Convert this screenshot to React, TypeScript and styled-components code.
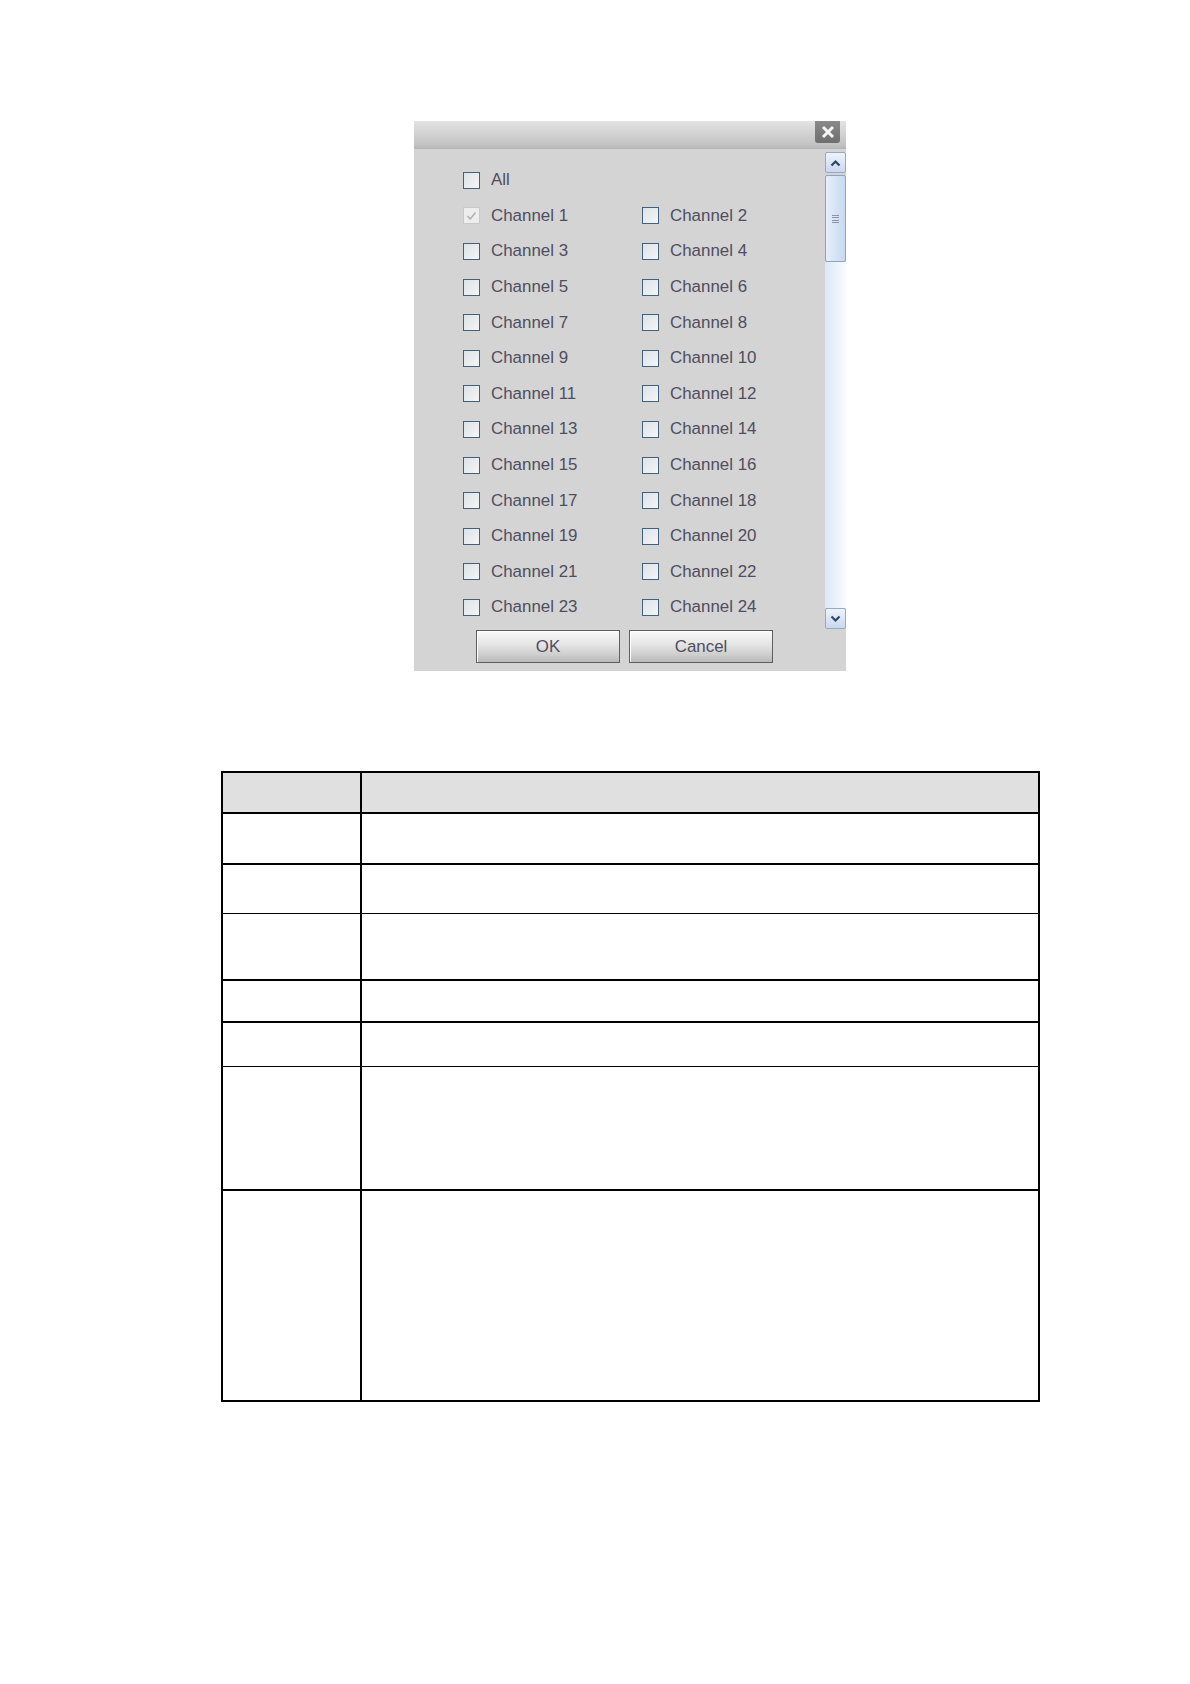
import React from "react";
import styled, { createGlobalStyle } from "styled-components";

const Global = createGlobalStyle`
  html, body { margin: 0; padding: 0; background: #ffffff; }
  body { font-family: "Liberation Sans", Arial, sans-serif; }
`;

const Page = styled.div`
  width: 1190px;
  min-height: 1684px;
  display: flex;
  flex-direction: column;
  padding-top: 121px;
  box-sizing: border-box;
`;

const Dialog = styled.div`
  margin-left: 414px;
  width: 432px;
  height: 550px;
  background: #d4d4d4;
  display: flex;
  flex-direction: column;
`;

const TitleBar = styled.div`
  height: 28px;
  flex: none;
  background: linear-gradient(#e3e3e3 0%, #d2d2d2 45%, #c2c2c2 85%, #b4b4b4 100%);
  display: flex;
  justify-content: flex-end;
  align-items: flex-start;
  padding-right: 6px;
`;

const CloseButton = styled.div`
  width: 25px;
  height: 22px;
  background: linear-gradient(#8a8a8a, #6e6e6e);
  border-radius: 0 0 3px 3px;
  display: flex;
  align-items: center;
  justify-content: center;
`;

const Body = styled.div`
  flex: 1;
  display: flex;
  flex-direction: column;
`;

const Main = styled.div`
  height: 480px;
  display: flex;
`;

const List = styled.div`
  flex: 1;
  padding: 13.5px 0 0 49px;
  display: grid;
  grid-template-columns: 179px 179px;
  grid-auto-rows: 35.6px;
  align-content: start;
`;

const Item = styled.label<{ $full?: boolean }>`
  display: flex;
  align-items: center;
  gap: 11px;
  grid-column: ${(p) => (p.$full ? "1 / span 2" : "auto")};
  font-size: 16.9px;
  color: #4f4e60;
  white-space: nowrap;
`;

const Box = styled.span<{ $checked?: boolean }>`
  width: 17px;
  height: 17px;
  box-sizing: border-box;
  flex: none;
  display: flex;
  align-items: center;
  justify-content: center;
  border: ${(p) => (p.$checked ? "1px solid #c9c9c9" : "1.6px solid #45607c")};
  background: ${(p) =>
    p.$checked ? "#ededed" : "linear-gradient(135deg, #dde3e8, #f4f5f6)"};
`;

const ScrollBar = styled.div`
  width: 21px;
  margin-top: 3px;
  display: flex;
  flex-direction: column;
`;

const Arrow = styled.div`
  height: 21px;
  flex: none;
  box-sizing: border-box;
  border: 1px solid #98a9c2;
  border-radius: 2px;
  background: linear-gradient(#eef3fb, #c9d8ee);
  display: flex;
  align-items: center;
  justify-content: center;
`;

const Thumb = styled.div`
  height: 87px;
  margin-top: 2px;
  flex: none;
  box-sizing: border-box;
  border: 1px solid #8ea3c3;
  border-radius: 2px;
  background: linear-gradient(to right, #e6eefa, #c9d9f0);
  display: flex;
  align-items: center;
  justify-content: center;
`;

const Grip = styled.div`
  width: 7px;
  height: 8px;
  background: repeating-linear-gradient(#8595ab 0 1px, transparent 1px 2.4px);
`;

const Track = styled.div`
  flex: 1;
  background: linear-gradient(to right, #dce7f7, #f8fbff);
`;

const Footer = styled.div`
  display: flex;
  gap: 9px;
  padding-left: 62px;
  padding-top: 1px;
`;

const Button = styled.div`
  width: 144px;
  height: 33px;
  box-sizing: border-box;
  border: 1px solid #5f5f5f;
  box-shadow: inset 1px 1px 0 #ffffff;
  background: linear-gradient(#fafafa 0%, #e4e4e4 45%, #cbcbcb 80%, #b9b9b9 100%);
  display: flex;
  align-items: center;
  justify-content: center;
  font-size: 16.9px;
  color: #4f4e60;
`;

const Table = styled.div`
  margin-top: 100px;
  margin-left: 221px;
  width: 819px;
  box-sizing: border-box;
  border: 2px solid #000000;
  display: flex;
  flex-direction: column;
`;

const Row = styled.div<{ $h: number; $line: number; $head?: boolean }>`
  display: grid;
  grid-template-columns: 139px 1fr;
  height: ${(p) => p.$h}px;
  border-top: ${(p) => p.$line}px solid #000000;
  background: ${(p) => (p.$head ? "#e0e0e0" : "#ffffff")};
`;

const KeyCell = styled.div`
  border-right: 2px solid #000000;
`;

const ValueCell = styled.div``;

const UpIcon = () => (
  <svg width="11" height="8" viewBox="0 0 11 8">
    <path d="M1.5 6.5 L5.5 2.5 L9.5 6.5" fill="none" stroke="#2e4763" strokeWidth="2.2" />
  </svg>
);

const DownIcon = () => (
  <svg width="11" height="8" viewBox="0 0 11 8">
    <path d="M1.5 1.5 L5.5 5.5 L9.5 1.5" fill="none" stroke="#2e4763" strokeWidth="2.2" />
  </svg>
);

const CloseIcon = () => (
  <svg width="14" height="14" viewBox="0 0 14 14">
    <path d="M2 2 L12 12 M12 2 L2 12" stroke="#f4f4f4" strokeWidth="3" />
  </svg>
);

const Check = () => (
  <svg width="11" height="10" viewBox="0 0 11 10">
    <path d="M1.5 5 L4.2 8 L9.5 1.5" fill="none" stroke="#b3b3b3" strokeWidth="1.6" />
  </svg>
);

const rows: { h: number; line: number; head?: boolean }[] = [
  { h: 39, line: 0, head: true },
  { h: 49, line: 2 },
  { h: 48, line: 2 },
  { h: 65, line: 1 },
  { h: 40, line: 2 },
  { h: 43, line: 2 },
  { h: 122, line: 1 },
  { h: 209, line: 2 },
];

export default function App() {
  const channels = Array.from({ length: 24 }, (_, i) => i + 1);
  return (
    <>
      <Global />
      <Page>
        <Dialog>
          <TitleBar>
            <CloseButton>
              <CloseIcon />
            </CloseButton>
          </TitleBar>
          <Body>
            <Main>
              <List>
                <Item $full>
                  <Box />
                  All
                </Item>
                {channels.map((n) => (
                  <Item key={n}>
                    <Box $checked={n === 1}>{n === 1 && <Check />}</Box>
                    Channel {n}
                  </Item>
                ))}
              </List>
              <ScrollBar>
                <Arrow>
                  <UpIcon />
                </Arrow>
                <Thumb>
                  <Grip />
                </Thumb>
                <Track />
                <Arrow>
                  <DownIcon />
                </Arrow>
              </ScrollBar>
            </Main>
            <Footer>
              <Button>OK</Button>
              <Button>Cancel</Button>
            </Footer>
          </Body>
        </Dialog>
        <Table>
          {rows.map((r, i) => (
            <Row key={i} $h={r.h} $line={r.line} $head={r.head}>
              <KeyCell />
              <ValueCell />
            </Row>
          ))}
        </Table>
      </Page>
    </>
  );
}
